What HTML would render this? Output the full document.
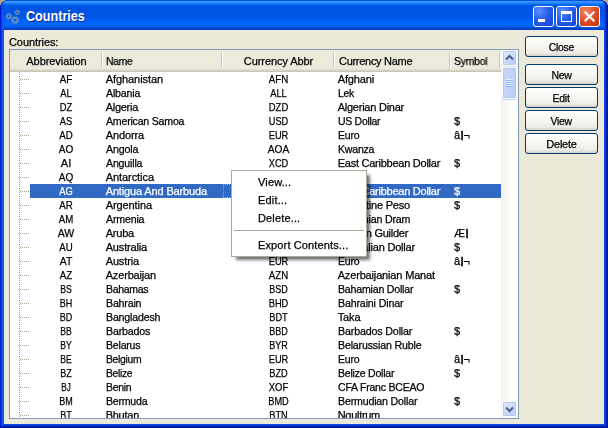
<!DOCTYPE html>
<html><head><meta charset="utf-8"><title>Countries</title>
<style>
html,body{margin:0;padding:0;}
body{width:608px;height:428px;overflow:hidden;background:#ece9d8;position:relative;font-family:"Liberation Sans",sans-serif;font-size:11px;color:#000;-webkit-text-stroke:0.25px currentColor;}
#win{position:absolute;left:0;top:0;width:608px;height:428px;background:#0831d9;overflow:hidden;}
#corner-l,#corner-r{position:absolute;top:0;width:8px;height:8px;background:#aca58f;}
#corner-l{left:0}#corner-r{right:0}
#frame{clip-path:polygon(0 5px,1px 5px,1px 3px,2px 3px,2px 2px,3px 2px,3px 1px,5px 1px,5px 0,603px 0,603px 1px,605px 1px,605px 2px,606px 2px,606px 3px,607px 3px,607px 5px,608px 5px,608px 428px,0 428px);position:absolute;left:0;top:0;width:608px;height:428px;border-radius:7px 7px 0 0;background:#0a50e8;}
#bl{z-index:3;position:absolute;left:0;top:10px;width:4px;height:418px;background:linear-gradient(to right,#0019cf 0,#0019cf 1px,#0a3fe0 1px,#0a3fe0 2px,#0c58ee 2px,#0c58ee 4px);}
#br{z-index:3;position:absolute;left:604px;top:10px;width:4px;height:418px;background:linear-gradient(to right,#0a48e0 0,#0a48e0 1px,#0838d0 1px,#0838d0 2px,#0420b0 2px,#0420b0 3px,#00138c 3px,#00138c 4px);}
#bb{z-index:4;clip-path:polygon(4px 0,604px 0,608px 4px,0 4px);position:absolute;left:0;top:424px;width:608px;height:4px;background:linear-gradient(to bottom,#0a48e0 0,#0a48e0 1px,#0838d0 1px,#0838d0 2px,#0420b0 2px,#0420b0 3px,#00138c 3px,#00138c 4px);}
#title{clip-path:polygon(0 5px,1px 5px,1px 3px,2px 3px,2px 2px,3px 2px,3px 1px,5px 1px,5px 0,603px 0,603px 1px,605px 1px,605px 2px,606px 2px,606px 3px,607px 3px,607px 5px,608px 5px,608px 428px,0 428px);position:absolute;left:0;top:0;width:608px;height:30px;border-radius:6px 6px 0 0;box-shadow:inset -1px 0 0 0 #00138c,inset -2px 0 0 0 #0420b0,inset -3px 0 0 0 #0838d0,inset 1px 0 0 0 #0019cf,inset 2px 0 0 0 #0a3fe0;
 background:linear-gradient(to bottom,#0a52dc 0px,#0a52dc 1px,#3a94ff 1.2px,#3593ff 2px,#2488fc 3px,#0f74f6 4px,#0462ec 5px,#0057e5 6px,#0054e3 8px,#0055e6 16px,#005af0 19px,#0163f8 21px,#0268fe 23px,#0267fc 25px,#0360f0 26.5px,#0454de 27.5px,#0546ca 28.5px,#083cbc 30px);}
#title .txt{-webkit-text-stroke:0;position:absolute;left:26px;top:8px;font-weight:bold;font-size:14px;line-height:16px;color:#fff;text-shadow:1px 1px 0 #0a2a8c;transform:scaleX(0.9);transform-origin:0 0;}
#content{position:absolute;left:4px;top:30px;width:600px;height:394px;background:#ece9d8;}
.tb{position:absolute;top:6px;width:19px;height:19px;border:1px solid #fff;border-radius:3px;}
.tb.b{background:radial-gradient(circle at 28% 22%,#5c8efc 0%,#2b62ee 40%,#1c4ee0 75%,#1843d0 100%);}
.tb.x{background:radial-gradient(circle at 30% 25%,#f08a66 0%,#de4c22 50%,#c03410 100%);}
#lbl{will-change:transform;position:absolute;left:8.5px;top:36px;line-height:12px;}
#tree{position:absolute;left:9px;top:49px;width:508px;height:368px;border:1px solid #7f9db9;background:#fff;overflow:hidden;}
#hdr{position:absolute;left:0;top:0;width:491px;height:22px;background:linear-gradient(to bottom,#ebeadb 0,#ebeadb 19px,#e2dece 19px,#e2dece 20px,#d6d2c2 20px,#d6d2c2 21px,#cbc7b8 21px,#cbc7b8 22px);}
#hdr span{will-change:transform;position:absolute;top:5px;line-height:12px;white-space:nowrap;}
#hdr i{position:absolute;top:3px;width:1px;height:15px;background:#c7c5b2;box-shadow:1px 0 0 #fff;}
#rows{will-change:transform;position:absolute;left:0;top:22px;width:491px;height:346px;overflow:hidden;}
.row{position:absolute;left:0;width:491px;height:14px;line-height:14px;white-space:nowrap;}
.row span{position:absolute;top:0;height:14px;}
.row.sel{color:#fff;}
.row.sel::before{content:"";position:absolute;left:20px;top:0;width:471px;height:14px;background:#316ac5;}
.c0{left:20px;width:72px;text-align:center;}
.c1{left:95.7px;}
.c2{left:212px;width:113px;text-align:center;}
.c3{left:327.7px;}
.c4{left:444px;}
.br{position:absolute;left:10px;top:7px;width:10px;height:1px;background:repeating-linear-gradient(to right,#a39f88 0,#a39f88 1px,transparent 1px,transparent 2px);}
#vline{position:absolute;left:9px;top:0;width:1px;height:346px;background:repeating-linear-gradient(to bottom,#a39f88 0,#a39f88 1px,transparent 1px,transparent 2px);}
.bar{font-weight:bold;font-size:9.5px;position:relative;top:-0.7px;margin:0 0 0 0.7px;-webkit-text-stroke:0.5px currentColor;}
#sb{position:absolute;left:491px;top:0;width:17px;height:368px;background:linear-gradient(to right,#f3f1ec 0,#fbfaf7 40%,#fefefb 70%,#fff 100%);}
.sbtn{position:absolute;left:1px;width:13px;height:14px;border:1px solid #fff;border-radius:2px;background:linear-gradient(to bottom right,#e1eafe,#b7caf7);box-shadow:0 0 0 1px #b4c8f6 inset;}
#thumb{position:absolute;left:1px;top:17px;width:13px;height:30px;border:1px solid #fff;border-radius:2px;background:linear-gradient(to right,#c9d7fc,#bacdfa);box-shadow:0 0 0 1px #b4c8f6 inset,0 1px 0 0 #c3d2f3,0 -1px 0 0 #d5def5;}
.btn{will-change:transform;position:absolute;left:525px;width:71px;height:19px;border:1px solid #003c74;border-radius:3px;background:linear-gradient(to bottom,#fff 0,#f4f3ee 60%,#ecebe5 85%,#d6d0c5 100%);text-align:center;line-height:21px;}
#focus{position:absolute;left:213px;top:112px;width:111px;height:14px;background:repeating-linear-gradient(to right,#e9a23a 0,#e9a23a 1px,transparent 1px,transparent 2px) 0 0/100% 1px no-repeat,repeating-linear-gradient(to right,#e9a23a 0,#e9a23a 1px,transparent 1px,transparent 2px) 0 100%/100% 1px no-repeat,repeating-linear-gradient(to bottom,#e9a23a 0,#e9a23a 1px,transparent 1px,transparent 2px) 0 0/1px 100% no-repeat,repeating-linear-gradient(to bottom,#e9a23a 0,#e9a23a 1px,transparent 1px,transparent 2px) 100% 0/1px 100% no-repeat;}
.btn span{display:inline-block;}
#menu{position:absolute;left:231px;top:170px;width:134px;height:85px;border:1px solid #aca899;background:#fff;box-shadow:4px 4px 3px -1px rgba(0,0,0,0.55);}
#menu span{will-change:transform;position:absolute;left:26px;line-height:14px;}
#menu hr{position:absolute;left:2px;top:59px;width:130px;height:1px;border:0;margin:0;background:#aca899;}
</style></head><body>
<div id="win">
<div id="corner-l"></div><div id="corner-r"></div>
<div id="frame"></div><div id="bl"></div><div id="br"></div><div id="bb"></div>
<div id="title">
<svg style="position:absolute;left:4px;top:8px" width="18" height="18" viewBox="0 0 18 18"><g fill="none" stroke="#5a88c6"><circle cx="4.7" cy="8.3" r="1.9" stroke-width="1.8"/><circle cx="13.4" cy="4.4" r="1.7" stroke-width="1.5"/><circle cx="11.1" cy="12.1" r="2.5" stroke-width="2.2"/></g><g fill="none" stroke="#5f8ab8" stroke-width="0.9"><circle cx="4.7" cy="8.3" r="3" stroke-dasharray="1.2 1.15"/><circle cx="13.4" cy="4.4" r="2.6" stroke-dasharray="1 1.04"/><circle cx="11.1" cy="12.1" r="3.7" stroke-dasharray="1.3 1.28"/></g></svg>
<div class="txt">Countries</div>
<div class="tb b" style="left:533px"><div style="position:absolute;left:4px;top:12px;width:7px;height:3px;background:#fff"></div></div>
<div class="tb b" style="left:556px"><div style="position:absolute;left:4px;top:4px;width:9px;height:7px;border:1px solid #fff;border-top-width:3px"></div></div>
<div class="tb x" style="left:579px"><svg width="19" height="19" viewBox="0 0 19 19" style="position:absolute;left:0;top:0"><path d="M4.7 4.7 L14.3 14.3 M14.3 4.7 L4.7 14.3" stroke="#fff" stroke-width="2.2" fill="none"/></svg></div>
</div>
<div id="content"></div>
<div id="lbl" style="letter-spacing:-0.08px">Countries:</div>
<div id="tree">
 <div id="hdr">
  <span style="left:1px;width:91px;text-align:center;letter-spacing:-0.07px">Abbreviation</span><i style="left:91px"></i>
  <span style="left:96px;letter-spacing:-0.4px;transform:scaleX(0.948);transform-origin:0 50%">Name</span><i style="left:211px"></i>
  <span style="left:212px;width:113px;text-align:center;letter-spacing:-0.08px">Currency Abbr</span><i style="left:323px"></i>
  <span style="left:329px;letter-spacing:-0.29px">Currency Name</span><i style="left:439px"></i>
  <span style="left:444px;letter-spacing:-0.3px;transform:scaleX(0.954);transform-origin:0 50%">Symbol</span><i style="left:489px"></i>
 </div>
 <div id="rows">
 <div id="vline"></div>
<div class="row" style="top:0px"><i class="br"></i><span class="c0" style="transform:scaleX(0.889)">AF</span><span class="c1" style="letter-spacing:-0.07px">Afghanistan</span><span class="c2" style="transform:scaleX(0.886)">AFN</span><span class="c3" style="letter-spacing:-0.14px">Afghani</span><span class="c4"></span></div>
<div class="row" style="top:14px"><i class="br"></i><span class="c0" style="transform:scaleX(0.854)">AL</span><span class="c1" style="letter-spacing:-0.18px;transform:scaleX(0.967);transform-origin:0 50%">Albania</span><span class="c2" style="transform:scaleX(0.843)">ALL</span><span class="c3" style="letter-spacing:-0.34px;transform:scaleX(0.945);transform-origin:0 50%">Lek</span><span class="c4"></span></div>
<div class="row" style="top:28px"><i class="br"></i><span class="c0" style="transform:scaleX(0.852)">DZ</span><span class="c1" style="letter-spacing:-0.28px">Algeria</span><span class="c2" style="transform:scaleX(0.862)">DZD</span><span class="c3" style="letter-spacing:-0.24px">Algerian Dinar</span><span class="c4"></span></div>
<div class="row" style="top:42px"><i class="br"></i><span class="c0" style="transform:scaleX(0.851)">AS</span><span class="c1" style="letter-spacing:-0.23px;transform:scaleX(0.964);transform-origin:0 50%">American Samoa</span><span class="c2" style="transform:scaleX(0.839)">USD</span><span class="c3" style="letter-spacing:-0.28px;transform:scaleX(0.949);transform-origin:0 50%">US Dollar</span><span class="c4">$</span></div>
<div class="row" style="top:56px"><i class="br"></i><span class="c0" style="transform:scaleX(0.883)">AD</span><span class="c1" style="letter-spacing:-0.12px">Andorra</span><span class="c2" style="transform:scaleX(0.839)">EUR</span><span class="c3" style="letter-spacing:-0.25px;transform:scaleX(0.958);transform-origin:0 50%">Euro</span><span class="c4">â<b class="bar">|</b>¬</span></div>
<div class="row" style="top:70px"><i class="br"></i><span class="c0" style="transform:scaleX(0.912)">AO</span><span class="c1" style="letter-spacing:-0.17px;transform:scaleX(0.971);transform-origin:0 50%">Angola</span><span class="c2" style="transform:scaleX(0.925)">AOA</span><span class="c3" style="letter-spacing:-0.25px;transform:scaleX(0.964);transform-origin:0 50%">Kwanza</span><span class="c4"></span></div>
<div class="row" style="top:84px"><i class="br"></i><span class="c0" style="transform:scaleX(1.009)">AI</span><span class="c1" style="letter-spacing:-0.19px;transform:scaleX(0.964);transform-origin:0 50%">Anguilla</span><span class="c2" style="transform:scaleX(0.839)">XCD</span><span class="c3" style="letter-spacing:-0.25px">East Caribbean Dollar</span><span class="c4">$</span></div>
<div class="row" style="top:98px"><i class="br"></i><span class="c0" style="transform:scaleX(0.912)">AQ</span><span class="c1" style="letter-spacing:-0.06px">Antarctica</span><span class="c2"></span><span class="c3"></span><span class="c4"></span></div>
<div class="row sel" style="top:112px"><i class="br"></i><span class="c0" style="transform:scaleX(0.849)">AG</span><span class="c1" style="letter-spacing:-0.14px">Antigua And Barbuda</span><span class="c2" style="transform:scaleX(0.839)">XCD</span><span class="c3" style="letter-spacing:-0.25px">East Caribbean Dollar</span><span class="c4">$</span></div>
<div class="row" style="top:126px"><i class="br"></i><span class="c0" style="transform:scaleX(0.883)">AR</span><span class="c1" style="letter-spacing:-0.09px">Argentina</span><span class="c2" style="transform:scaleX(0.862)">ARS</span><span class="c3" style="letter-spacing:-0.21px">Argentine Peso</span><span class="c4">$</span></div>
<div class="row" style="top:140px"><i class="br"></i><span class="c0" style="transform:scaleX(0.879)">AM</span><span class="c1" style="letter-spacing:-0.19px;transform:scaleX(0.967);transform-origin:0 50%">Armenia</span><span class="c2" style="transform:scaleX(0.879)">AMD</span><span class="c3" style="letter-spacing:-0.19px;transform:scaleX(0.969);transform-origin:0 50%">Armenian Dram</span><span class="c4"></span></div>
<div class="row" style="top:154px"><i class="br"></i><span class="c0" style="transform:scaleX(0.953)">AW</span><span class="c1" style="letter-spacing:-0.21px">Aruba</span><span class="c2" style="transform:scaleX(0.908)">AWG</span><span class="c3" style="letter-spacing:-0.26px">Aruban Guilder</span><span class="c4">Æ<b class="bar">|</b></span></div>
<div class="row" style="top:168px"><i class="br"></i><span class="c0" style="transform:scaleX(0.883)">AU</span><span class="c1" style="letter-spacing:-0.17px">Australia</span><span class="c2" style="transform:scaleX(0.882)">AUD</span><span class="c3" style="letter-spacing:-0.2px">Australian Dollar</span><span class="c4">$</span></div>
<div class="row" style="top:182px"><i class="br"></i><span class="c0" style="transform:scaleX(0.943)">AT</span><span class="c1" style="letter-spacing:-0.14px">Austria</span><span class="c2" style="transform:scaleX(0.839)">EUR</span><span class="c3" style="letter-spacing:-0.25px;transform:scaleX(0.958);transform-origin:0 50%">Euro</span><span class="c4">â<b class="bar">|</b>¬</span></div>
<div class="row" style="top:196px"><i class="br"></i><span class="c0" style="transform:scaleX(0.889)">AZ</span><span class="c1" style="letter-spacing:-0.17px">Azerbaijan</span><span class="c2" style="transform:scaleX(0.886)">AZN</span><span class="c3" style="letter-spacing:-0.16px">Azerbaijanian Manat</span><span class="c4"></span></div>
<div class="row" style="top:210px"><i class="br"></i><span class="c0" style="transform:scaleX(0.783)">BS</span><span class="c1" style="letter-spacing:-0.31px;transform:scaleX(0.955);transform-origin:0 50%">Bahamas</span><span class="c2" style="transform:scaleX(0.818)">BSD</span><span class="c3" style="letter-spacing:-0.21px;transform:scaleX(0.963);transform-origin:0 50%">Bahamian Dollar</span><span class="c4">$</span></div>
<div class="row" style="top:224px"><i class="br"></i><span class="c0" style="transform:scaleX(0.818)">BH</span><span class="c1" style="letter-spacing:-0.19px;transform:scaleX(0.965);transform-origin:0 50%">Bahrain</span><span class="c2" style="transform:scaleX(0.839)">BHD</span><span class="c3" style="letter-spacing:-0.16px;transform:scaleX(0.968);transform-origin:0 50%">Bahraini Dinar</span><span class="c4"></span></div>
<div class="row" style="top:238px"><i class="br"></i><span class="c0" style="transform:scaleX(0.818)">BD</span><span class="c1" style="letter-spacing:-0.2px;transform:scaleX(0.967);transform-origin:0 50%">Bangladesh</span><span class="c2" style="transform:scaleX(0.841)">BDT</span><span class="c3" style="letter-spacing:-0.11px">Taka</span><span class="c4"></span></div>
<div class="row" style="top:252px"><i class="br"></i><span class="c0" style="transform:scaleX(0.783)">BB</span><span class="c1" style="letter-spacing:-0.18px;transform:scaleX(0.97);transform-origin:0 50%">Barbados</span><span class="c2" style="transform:scaleX(0.818)">BBD</span><span class="c3" style="letter-spacing:-0.16px;transform:scaleX(0.971);transform-origin:0 50%">Barbados Dollar</span><span class="c4">$</span></div>
<div class="row" style="top:266px"><i class="br"></i><span class="c0" style="transform:scaleX(0.783)">BY</span><span class="c1" style="letter-spacing:-0.22px;transform:scaleX(0.96);transform-origin:0 50%">Belarus</span><span class="c2" style="transform:scaleX(0.818)">BYR</span><span class="c3" style="letter-spacing:-0.18px;transform:scaleX(0.967);transform-origin:0 50%">Belarussian Ruble</span><span class="c4"></span></div>
<div class="row" style="top:280px"><i class="br"></i><span class="c0" style="transform:scaleX(0.783)">BE</span><span class="c1" style="letter-spacing:-0.34px;transform:scaleX(0.944);transform-origin:0 50%">Belgium</span><span class="c2" style="transform:scaleX(0.839)">EUR</span><span class="c3" style="letter-spacing:-0.25px;transform:scaleX(0.958);transform-origin:0 50%">Euro</span><span class="c4">â<b class="bar">|</b>¬</span></div>
<div class="row" style="top:294px"><i class="br"></i><span class="c0" style="transform:scaleX(0.818)">BZ</span><span class="c1" style="letter-spacing:-0.33px;transform:scaleX(0.939);transform-origin:0 50%">Belize</span><span class="c2" style="transform:scaleX(0.841)">BZD</span><span class="c3" style="letter-spacing:-0.22px;transform:scaleX(0.956);transform-origin:0 50%">Belize Dollar</span><span class="c4">$</span></div>
<div class="row" style="top:308px"><i class="br"></i><span class="c0" style="transform:scaleX(0.74)">BJ</span><span class="c1" style="letter-spacing:-0.3px;transform:scaleX(0.95);transform-origin:0 50%">Benin</span><span class="c2" style="transform:scaleX(0.862)">XOF</span><span class="c3" style="letter-spacing:-0.25px;transform:scaleX(0.961);transform-origin:0 50%">CFA Franc BCEAO</span><span class="c4"></span></div>
<div class="row" style="top:322px"><i class="br"></i><span class="c0" style="transform:scaleX(0.818)">BM</span><span class="c1" style="letter-spacing:-0.25px;transform:scaleX(0.963);transform-origin:0 50%">Bermuda</span><span class="c2" style="transform:scaleX(0.838)">BMD</span><span class="c3" style="letter-spacing:-0.19px;transform:scaleX(0.967);transform-origin:0 50%">Bermudian Dollar</span><span class="c4">$</span></div>
<div class="row" style="top:336px"><i class="br"></i><span class="c0" style="transform:scaleX(0.818)">BT</span><span class="c1" style="letter-spacing:-0.26px">Bhutan</span><span class="c2" style="transform:scaleX(0.841)">BTN</span><span class="c3" style="letter-spacing:-0.29px">Ngultrum</span><span class="c4"></span></div>
<div id="focus"></div>
 </div>
 <div id="sb">
  <div class="sbtn" style="top:0px"><svg width="13" height="14" viewBox="0 0 13 14"><path d="M3 8.5 L6.5 5 L10 8.5" stroke="#4d6185" stroke-width="2" fill="none"/></svg></div>
  <div id="thumb"><div style="position:absolute;left:3px;top:11px;width:7px;height:8px;background:repeating-linear-gradient(to bottom,#eef4fe 0,#eef4fe 1px,#8cb0f8 1px,#8cb0f8 2px)"></div></div>
  <div class="sbtn" style="top:351px"><svg width="13" height="14" viewBox="0 0 13 14"><path d="M3 5.5 L6.5 9 L10 5.5" stroke="#4d6185" stroke-width="2" fill="none"/></svg></div>
 </div>
</div>
<div class="btn" style="top:36px"><span style="letter-spacing:-0.3px;transform:scaleX(0.95);transform-origin:50% 50%">Close</span></div>
<div class="btn" style="top:64px"><span style="letter-spacing:-0.3px;transform:scaleX(0.961);transform-origin:50% 50%">New</span></div>
<div class="btn" style="top:87px"><span style="letter-spacing:-0.22px;transform:scaleX(0.956);transform-origin:50% 50%">Edit</span></div>
<div class="btn" style="top:110px"><span style="letter-spacing:-0.31px;transform:scaleX(0.95);transform-origin:50% 50%">View</span></div>
<div class="btn" style="top:133px"><span style="letter-spacing:-0.25px">Delete</span></div>
<div id="menu">
 <span style="top:4px;letter-spacing:0.15px">View...</span>
 <span style="top:22px;letter-spacing:0.17px">Edit...</span>
 <span style="top:40px;letter-spacing:0.15px">Delete...</span>
 <hr>
 <span style="top:67px;letter-spacing:0.13px">Export Contents...</span>
</div>
</div>
</body></html>
